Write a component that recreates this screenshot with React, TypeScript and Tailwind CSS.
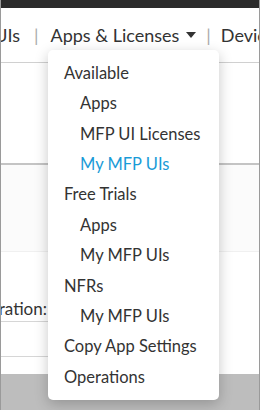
import React from 'react';

const items: { label: string; indent?: boolean; active?: boolean }[] = [
    { label: 'Available' },
    { label: 'Apps', indent: true },
    { label: 'MFP UI Licenses', indent: true },
    { label: 'My MFP UIs', indent: true, active: true },
    { label: 'Free Trials' },
    { label: 'Apps', indent: true },
    { label: 'My MFP UIs', indent: true },
    { label: 'NFRs' },
    { label: 'My MFP UIs', indent: true },
    { label: 'Copy App Settings' },
    { label: 'Operations' },
];

export default function App() {
    return (
        <div
            className="relative w-[260px] h-[410px] overflow-hidden bg-white border-x border-[#9a9a9a] text-[#333]"
            style={{ fontFamily: 'Lato, "Open Sans", sans-serif' }}
        >
            <div className="h-2 bg-[#2b2b2b]" />

            {/* nav */}
            <div className="h-[55px] flex items-center text-[18px] border-b border-[#d0d0d0] whitespace-nowrap">
                <span className="w-[19px] flex justify-end shrink-0">
                    <span>UIs</span>
                </span>
                <span className="ml-[14px] text-[#aaa]">|</span>
                <span className="ml-[12px]">Apps &amp; Licenses</span>
                <span className="ml-[7px] w-0 h-0 border-x-[5px] border-x-transparent border-t-[6px] border-t-[#333]" />
                <span className="ml-[10px] text-[#aaa]">|</span>
                <span className="ml-[10px]">Devices</span>
            </div>

            <div className="h-[102px] border-b-2 border-[#c4c4c4]" />
            <div className="h-[87px] bg-[#fbfbfb] border-b border-[#f0f0f0]" />
            <div className="h-[70px] flex items-end border-b border-[#d6d6d6] w-[120px] text-[17px]">
                <span className="w-[46px] flex justify-end whitespace-nowrap">
                    <span>ration:</span>
                </span>
            </div>
            <div className="h-[35px] border-b border-[#d6d6d6] w-[120px]" />
            <div className="h-[17px]" />
            <div className="h-[40px] bg-[#bdbdbd]" />

            {/* dropdown */}
            <div className="absolute left-[47px] top-[50px] w-[171px] h-[350px] bg-white rounded-[5px] shadow-[0_4px_14px_rgba(0,0,0,0.22)] pt-[8px]">
                {items.map((it, i) => (
                    <div
                        key={i}
                        className={
                            'h-[30.4px] flex items-center text-[16.5px] whitespace-nowrap ' +
                            (it.indent ? 'pl-[32px] ' : 'pl-[16px] ') +
                            (it.active ? 'text-[#1a9bd7]' : 'text-[#333]')
                        }
                    >
                        {it.label}
                    </div>
                ))}
            </div>
        </div>
    );
}
